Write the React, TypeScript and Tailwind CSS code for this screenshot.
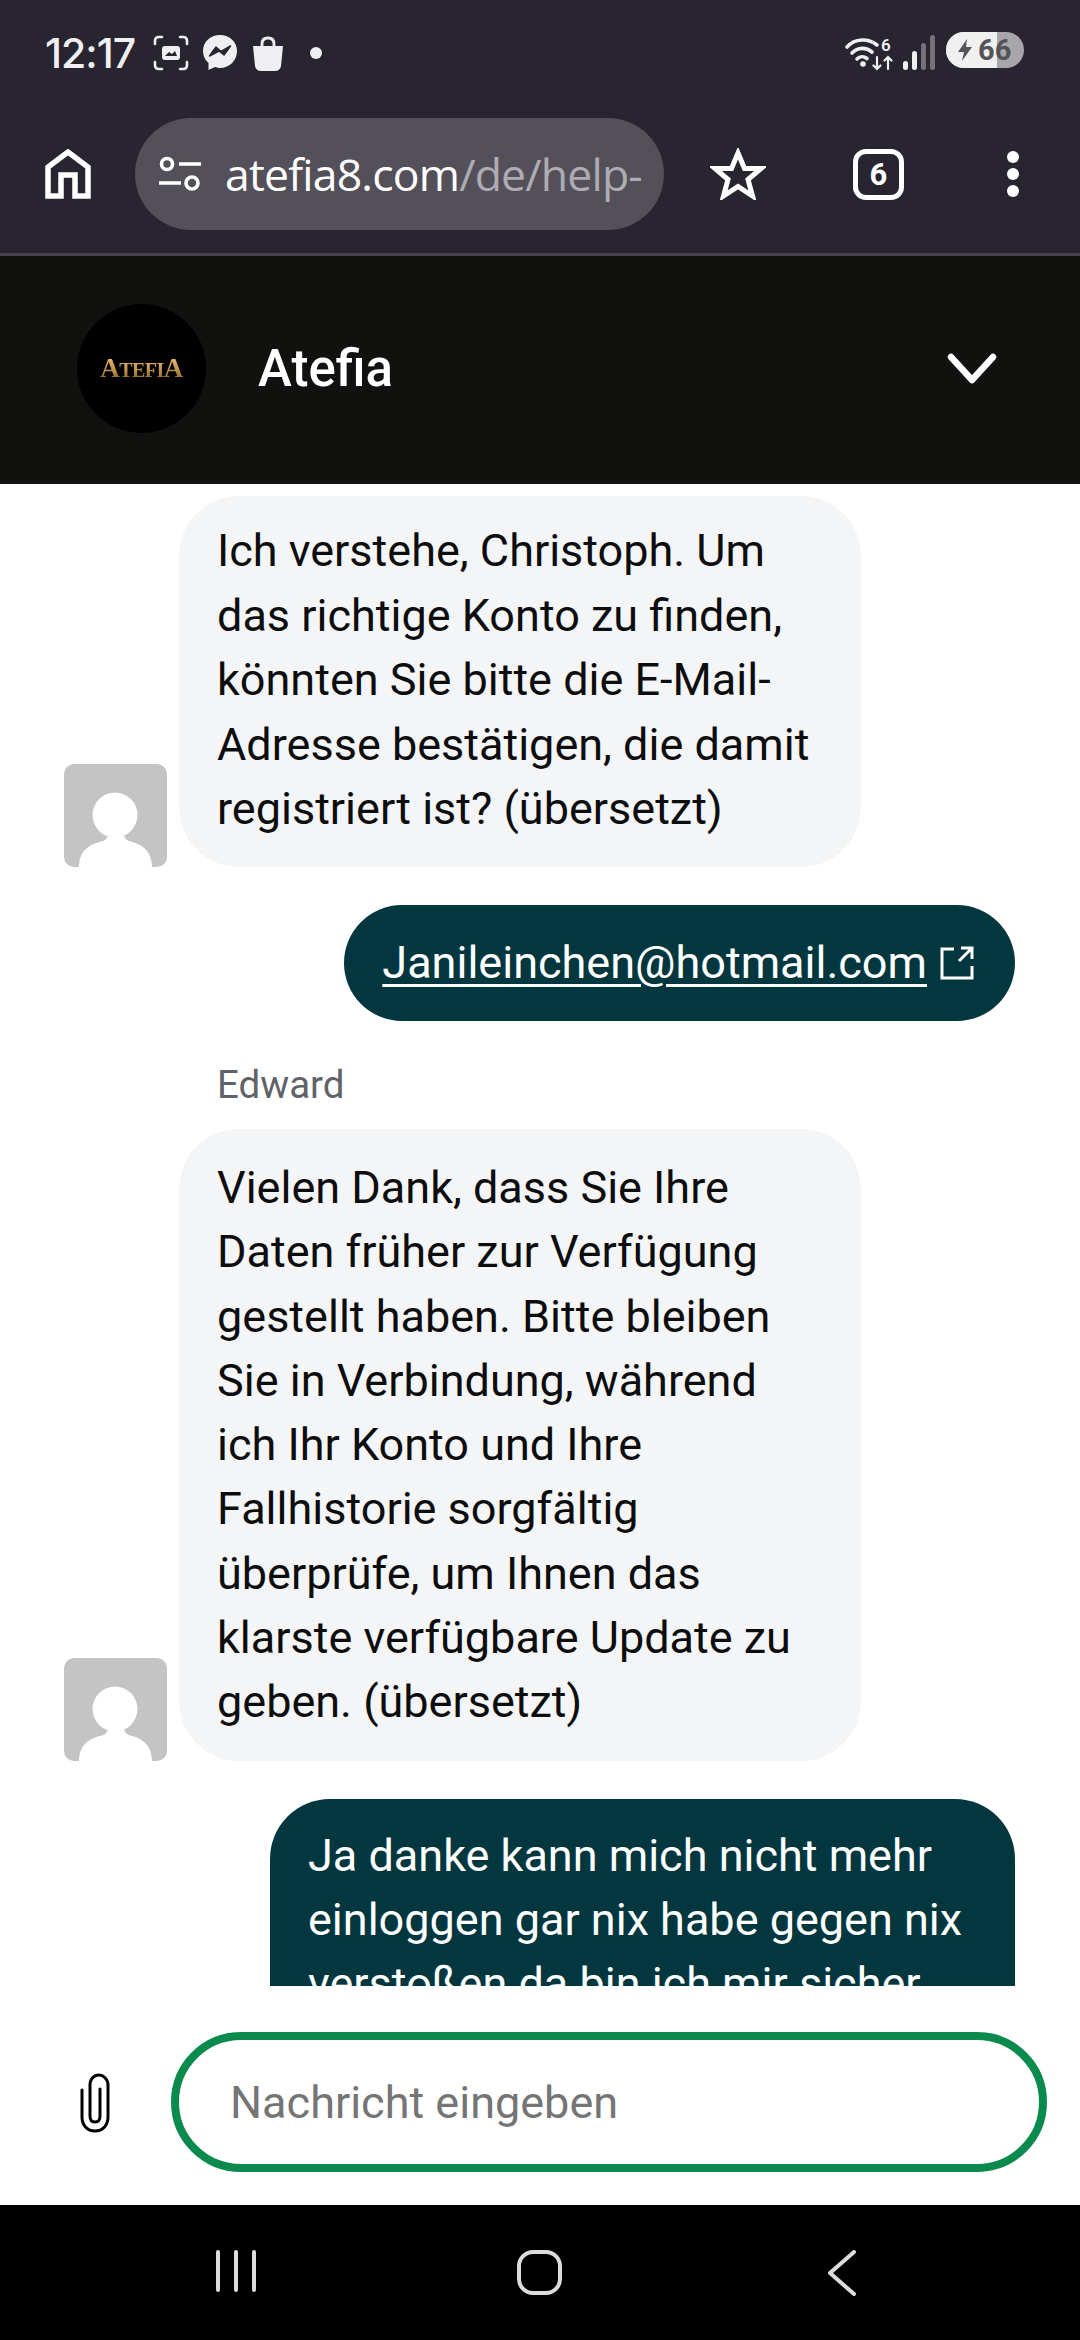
const roboto = { fontFamily: "Roboto, 'Noto Sans', sans-serif" };

function Avatar() {
  return (
    <div className="h-[103px] w-[103px] shrink-0 overflow-hidden rounded-[10px] bg-[#c4c4c4]">
      <svg viewBox="0 0 103 103" className="h-full w-full" fill="#ffffff">
        <circle cx="51" cy="51" r="22.5" />
        <path d="M15 103C15 88 24 81 36 78C41 77 44 74 44 70H60C60 74 63 77 68 78C79 81 88 88 88 103Z" />
      </svg>
    </div>
  );
}

function Received({ lines, pad }: { lines: string[]; pad: string }) {
  return (
    <div className="flex items-end gap-[12px] pl-[64px]">
      <Avatar />
      <div className={`w-[682px] rounded-[60px] bg-[#f4f5f7] px-[38px] ${pad} text-[45px] text-[#0d0d0d]`}>
        {lines.map((l) => (
          <div key={l} className="whitespace-nowrap">{l}</div>
        ))}
      </div>
    </div>
  );
}

export default function App() {
  return (
    <div className="flex h-[2340px] w-[1080px] flex-col overflow-hidden bg-white" style={roboto}>
      {/* browser chrome */}
      <div className="h-[256px] shrink-0 border-b-[3px] border-[#45424c] bg-[#282430]">
        <div className="flex h-[118px] items-start pl-[45px] pr-[56px] pt-[34px]">
          <span className="text-[41px] font-medium leading-[38px] text-[#f0f0f2]" style={{ fontFamily: "Inter, Roboto, sans-serif", letterSpacing: "-1px" }}>12:17</span>
          <svg viewBox="0 0 36 36" className="ml-[18px] mt-[1px] h-[36px] w-[36px]" fill="none" stroke="#efeff1" strokeWidth="2.6" strokeLinecap="round">
            <path d="M9 2H6Q2 2 2 6V9M27 2H30Q34 2 34 6V9M2 27V30Q2 34 6 34H9M34 27V30Q34 34 30 34H27" />
            <rect x="9" y="11" width="18" height="14" rx="3" fill="#efeff1" stroke="none" />
            <path d="M12 21L16 17L19 19L22 16L24 21Z" fill="#282430" stroke="none" />
          </svg>
          <svg viewBox="0 0 36 38" className="ml-[13px] mt-[0px] h-[38px] w-[36px]">
            <path d="M18 1C8 1 1 8 1 17C1 22 3 26 6.500 29V36L13 33C15 33.500 16.500 34 18 34C28 34 35 26 35 17C35 8 28 1 18 1Z" fill="#efeff1" />
            <path d="M7.500 22L14 13L19 17.500L28.500 12L22 21L17 17Z" fill="#282430" stroke="#282430" strokeWidth="1.500" strokeLinejoin="round" />
          </svg>
          <svg viewBox="0 0 32 36" className="ml-[14px] mt-[2px] h-[36px] w-[32px]">
            <path d="M1 10H31L29 30Q28 35 23 35H9Q4 35 3 30Z" fill="#efeff1" />
            <path d="M10 11V8Q10 2 16 2Q22 2 22 8V11" fill="none" stroke="#efeff1" strokeWidth="2.800" />
          </svg>
          <div className="ml-[26px] mt-[13px] h-[12px] w-[12px] rounded-full bg-[#efeff1]" />
          <div className="ml-auto flex items-start">
            <svg viewBox="0 0 48 36" className="mt-[2px] h-[36px] w-[48px]" fill="none" stroke="#efeff1" strokeWidth="3.600" strokeLinecap="round">
              <path d="M2 11C10 2 23 2 32 9" />
              <path d="M7 17C13 11 21 11 27 16" />
              <path d="M12 23C15 20 19 20 22 22.500" />
              <circle cx="18" cy="28" r="2.800" fill="#efeff1" stroke="none" />
              <path d="M32 21V33M28.500 29.500L32 33L35.500 29.500M43 33V21M39.500 24.500L43 21L46.500 24.500" strokeWidth="2.200" />
              <text x="36" y="15" fontSize="17" fontWeight="600" fill="#efeff1" stroke="none" fontFamily="Roboto, sans-serif">6</text>
            </svg>
            <svg viewBox="0 0 32 35" className="ml-[10px] mt-[1px] h-[35px] w-[32px]">
              <rect x="0" y="26" width="5" height="9" rx="2.500" fill="#efeff1" />
              <rect x="9" y="16" width="5" height="19" rx="2.500" fill="#efeff1" />
              <rect x="18" y="8" width="5" height="27" rx="2.500" fill="#75717b" />
              <rect x="27" y="0" width="5" height="35" rx="2.500" fill="#75717b" />
            </svg>
            <div className="relative ml-[11px] -mt-[2px] flex h-[36px] w-[78px] items-center overflow-hidden rounded-full bg-[#a8a6aa]">
              <div className="absolute inset-y-0 left-0 w-[51px] bg-[#f0f0f0]" />
              <svg viewBox="0 0 16 24" className="relative ml-[11px] h-[24px] w-[16px]" fill="#55535a">
                <path d="M10 1L1 14H7L5 23L15 9H9Z" />
              </svg>
              <span className="relative ml-[5px] text-[29px] font-bold leading-none text-[#55535a]">66</span>
            </div>
          </div>
        </div>
        <div className="flex h-[112px] items-center pl-[45px]">
          <svg viewBox="0 0 46 50" className="h-[50px] w-[46px]" fill="none" stroke="#ffffff" strokeWidth="5.500">
            <path d="M3 47V18L23 3L43 18V47H30V26H16V47Z" />
          </svg>
          <div className="ml-[44px] flex h-[112px] w-[529px] items-center overflow-hidden rounded-full bg-[#54505a]">
            <svg viewBox="0 0 42 36" className="ml-[24px] h-[36px] w-[42px] shrink-0" fill="none" stroke="#ffffff" strokeWidth="3.600">
              <circle cx="8" cy="8" r="5.500" />
              <path d="M20 8H42M0 27H22" />
              <circle cx="33" cy="27" r="6" />
            </svg>
            <span className="ml-[24px] whitespace-nowrap text-[44.5px] leading-none text-white" style={{ fontFamily: "'Open Sans', Roboto, sans-serif", letterSpacing: "-0.8px" }}>
              atefia8.com<span className="text-[#aeabb2]">/de/help-</span>
            </span>
          </div>
          <svg viewBox="0 0 56 52" className="ml-[46px] h-[52px] w-[56px]" fill="none" stroke="#ffffff" strokeWidth="5">
            <path d="M28 5L34.500 20.500H51L38 31.500L42.500 48L28 38.500L13.500 48L18 31.500L5 20.500H21.500Z" />
          </svg>
          <div className="ml-[87px] flex h-[51px] w-[51px] items-center justify-center rounded-[13px] border-[5px] border-white text-[31px] font-bold leading-none text-white">6</div>
          <div className="ml-[103px] flex flex-col gap-[5px]">
            <div className="h-[12px] w-[12px] rounded-full bg-white" />
            <div className="h-[12px] w-[12px] rounded-full bg-white" />
            <div className="h-[12px] w-[12px] rounded-full bg-white" />
          </div>
        </div>
      </div>

      {/* chat header */}
      <div className="flex h-[228px] shrink-0 items-center bg-[#11120f] pb-[3px] pl-[77px] pr-[83px]">
        <div className="flex h-[129px] w-[129px] items-center justify-center rounded-full bg-black">
          <span
            className="flex items-baseline bg-gradient-to-b from-[#ecc27a] via-[#c99a4e] to-[#7d5a26] bg-clip-text font-bold leading-none text-transparent"
            style={{ fontFamily: "'Liberation Serif', serif", letterSpacing: "-0.5px" }}
          >
            <span className="text-[27px]">A</span>
            <span className="text-[20px]">TEFI</span>
            <span className="text-[27px]">A</span>
          </span>
        </div>
        <span className="ml-[52px] text-[51px] font-medium leading-none text-white">Atefia</span>
        <svg viewBox="0 0 50 32" className="ml-auto h-[32px] w-[50px]" fill="none" stroke="#ffffff" strokeWidth="6.500" strokeLinecap="round" strokeLinejoin="round">
          <path d="M4 4L25 27L46 4" />
        </svg>
      </div>

      {/* messages */}
      <div className="flex min-h-0 flex-1 flex-col overflow-hidden pt-[12px]">
        <Received
          pad="pt-[23px] pb-[25px] leading-[64.6px]"
          lines={[
            "Ich verstehe, Christoph. Um",
            "das richtige Konto zu finden,",
            "könnten Sie bitte die E-Mail-",
            "Adresse bestätigen, die damit",
            "registriert ist? (übersetzt)",
          ]}
        />
        <div className="mt-[38px] flex justify-end pr-[65px]">
          <div className="flex h-[116px] items-center rounded-full bg-[#02373f] pl-[38px] pr-[41px] text-[45px] leading-[64px] text-white">
            <span className="underline decoration-[3px] underline-offset-[6px]">Janileinchen@hotmail.com</span>
            <svg viewBox="0 0 34 34" className="ml-[13px] h-[34px] w-[34px]" fill="none" stroke="#ffffff" strokeWidth="3">
              <path d="M14 3H2V32H32V20M19 15L32 2M21 2H32V13" />
            </svg>
          </div>
        </div>
        <div className="mt-[37px] pl-[217px] text-[38.500px] leading-[54px] text-[#5f6368]">Edward</div>
        <div className="mt-[17px]">
          <Received
            pad="pt-[27px] pb-[26px] leading-[64.3px]"
            lines={[
              "Vielen Dank, dass Sie Ihre",
              "Daten früher zur Verfügung",
              "gestellt haben. Bitte bleiben",
              "Sie in Verbindung, während",
              "ich Ihr Konto und Ihre",
              "Fallhistorie sorgfältig",
              "überprüfe, um Ihnen das",
              "klarste verfügbare Update zu",
              "geben. (übersetzt)",
            ]}
          />
        </div>
        <div className="mt-[38px] flex justify-end pr-[65px]">
          <div className="w-[745px] shrink-0 rounded-t-[60px] bg-[#02373f] px-[38px] pb-[24px] pt-[25px] text-[45px] leading-[64.3px] text-white">
            <div className="whitespace-nowrap">Ja danke kann mich nicht mehr</div>
            <div className="whitespace-nowrap">einloggen gar nix habe gegen nix</div>
            <div className="whitespace-nowrap">verstoßen da bin ich mir sicher</div>
          </div>
        </div>
      </div>

      {/* composer */}
      <div className="flex h-[219px] shrink-0 items-start bg-white pl-[80px] pt-[46px]">
        <svg viewBox="0 0 30 60" className="mt-[41px] h-[60px] w-[30px]" fill="none" stroke="#000000" strokeWidth="3" strokeLinecap="round">
          <path d="M2 17V44C2 52 7 58 15 58C23 58 28 52 28 44V12C28 6 23 2 19 2C14 2 10 6 10 12V43C10 47 12 49 15 49C18 49 20 47 20 43V16" />
        </svg>
        <div className="ml-[61px] flex h-[140px] w-[876px] items-center rounded-full border-[8px] border-[#0a8a4c] pl-[51px]">
          <span className="text-[45px] leading-none text-[#757575]">Nachricht eingeben</span>
        </div>
      </div>

      {/* system nav */}
      <div className="relative h-[135px] shrink-0 bg-black">
        <div className="flex h-full items-start pl-[216px] pt-[45px]">
          <div className="flex gap-[14px]">
            <div className="h-[42px] w-[4px] rounded-full bg-[#dcdcdc]" />
            <div className="h-[42px] w-[4px] rounded-full bg-[#dcdcdc]" />
            <div className="h-[42px] w-[4px] rounded-full bg-[#dcdcdc]" />
          </div>
          <div className="ml-[261px] h-[45px] w-[45px] rounded-[16px] border-[4px] border-[#dcdcdc]" />
          <svg viewBox="0 0 28 46" className="ml-[266px] h-[46px] w-[28px]" fill="none" stroke="#dcdcdc" strokeWidth="4" strokeLinecap="round" strokeLinejoin="round">
            <path d="M26 2L2 23L26 44" />
          </svg>
        </div>
      </div>
    </div>
  );
}
